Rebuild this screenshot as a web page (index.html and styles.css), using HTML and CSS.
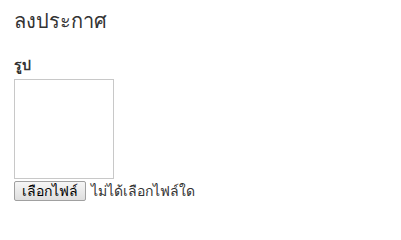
FILE: index.html
```html
<!DOCTYPE html>
<html lang="th">
<head>
<meta charset="utf-8">
<link rel="stylesheet" href="styles.css">
</head>
<body>
<div class="page">
  <h2 class="title">ลงประกาศ</h2>
  <label class="field-label">รูป</label>
  <div class="preview"></div>
  <div class="file-row">
    <button class="file-btn" type="button">เลือกไฟล์</button>
    <span class="file-status">ไม่ได้เลือกไฟล์ใด</span>
  </div>
</div>
</body>
</html>
```
FILE: styles.css
```css
html, body {
  margin: 0;
  padding: 0;
  background: #ffffff;
}
.page {
  padding: 8px 14px;
  font-family: "Noto Sans", "DejaVu Sans", "Liberation Sans", sans-serif;
  color: #333333;
  display: flex;
  flex-direction: column;
  align-items: flex-start;
}
.title {
  margin: 0;
  font-size: 20px;
  font-weight: normal;
  line-height: 26px;
  color: #333333;
}
.field-label {
  margin-top: 22px;
  font-size: 14px;
  font-weight: bold;
  line-height: 18px;
}
.preview {
  margin-top: 5px;
  width: 98px;
  height: 98px;
  border: 1px solid #c8c8c8;
}
.file-row {
  margin-top: 1px;
  display: flex;
  align-items: center;
  gap: 5px;
}
.file-btn {
  font-family: inherit;
  font-size: 14px;
  color: #000;
  height: 20px;
  padding: 0 7px;
  background: linear-gradient(#f6f6f6, #dedede);
  border: 1px solid #a0a0a0;
  border-radius: 2px;
  line-height: 18px;
}
.file-status {
  font-size: 14px;
  color: #333333;
}
```
